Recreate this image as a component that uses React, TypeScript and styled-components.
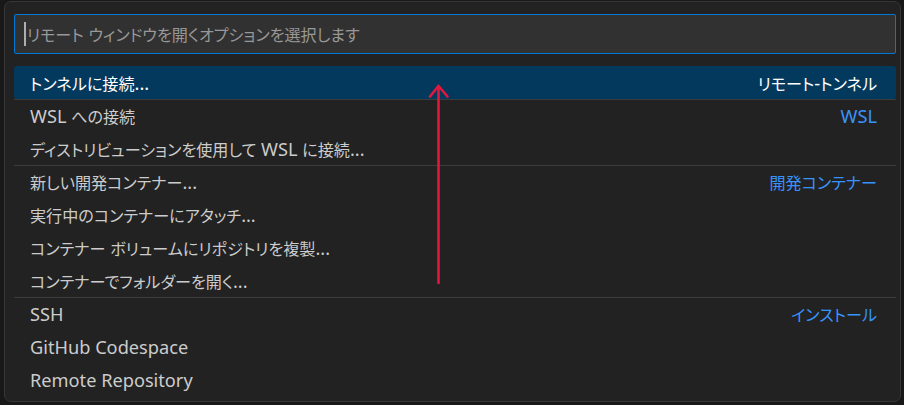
import React from "react";
import styled, { createGlobalStyle } from "styled-components";

const GlobalStyle = createGlobalStyle`
  html, body {
    margin: 0;
    padding: 0;
    background: #181818;
  }
  body {
    width: 904px;
    height: 405px;
    overflow: hidden;
    font-family: "Noto Sans", "Noto Sans CJK JP", sans-serif;
  }
`;

const Stage = styled.div`
  position: relative;
  width: 904px;
  height: 405px;
  box-sizing: border-box;
  padding: 1px 3px 3px 4px;
`;

const Panel = styled.div`
  box-sizing: border-box;
  width: 897px;
  height: 401px;
  background: #222222;
  border: 1px solid #363636;
  border-radius: 7px;
  padding: 12px 4px 0 9px;
  display: flex;
  flex-direction: column;
  gap: 12px;
  overflow: hidden;
`;

const InputBox = styled.div`
  box-sizing: border-box;
  height: 40px;
  background: #313131;
  border: 1px solid #0078d4;
  border-radius: 2px;
  display: flex;
  align-items: center;
  padding-left: 9px;
`;

const Caret = styled.span`
  width: 2px;
  height: 24px;
  background: #aeafad;
  flex: none;
`;

const Placeholder = styled.span`
  margin-left: 1px;
  color: #989898;
  font-size: 18.2px;
  white-space: nowrap;
`;

const List = styled.div`
  display: flex;
  flex-direction: column;
`;

const Row = styled.div<{ $sep?: boolean; $active?: boolean }>`
  box-sizing: border-box;
  height: 33px;
  display: flex;
  align-items: center;
  justify-content: space-between;
  padding: 0 19px 0 16px;
  border-top: 1px solid ${(p) => (p.$sep ? "#3c3c3c" : "transparent")};
  background: ${(p) => (p.$active ? "#04395e" : "transparent")};
  border-radius: ${(p) => (p.$active ? "3px" : "0")};
  color: ${(p) => (p.$active ? "#ffffff" : "#cccccc")};
  font-size: 18.2px;
  white-space: nowrap;
`;

const Label = styled.span``;

const Group = styled.span<{ $active?: boolean }>`
  color: ${(p) => (p.$active ? "#ffffff" : "#3794ff")};
`;

const Cjk = styled.span`
  font-family: "Noto Sans CJK JP", sans-serif;
  font-size: 0.885em;
  font-feature-settings: "palt";
`;

const Overlay = styled.svg`
  position: absolute;
  left: 0;
  top: 0;
  pointer-events: none;
`;

const CJK_RE = /([\u3000-\u30ff\u4e00-\u9fff\uff00-\uffef]+)/;

function Txt({ children }: { children: string }) {
  const parts = children.split(CJK_RE).filter((s) => s.length > 0);
  return (
    <>
      {parts.map((p, i) =>
        CJK_RE.test(p) ? <Cjk key={i}>{p}</Cjk> : <React.Fragment key={i}>{p}</React.Fragment>
      )}
    </>
  );
}

type Item = { label: string; group?: string; sep?: boolean; active?: boolean };

const items: Item[] = [
  { label: "トンネルに接続...", group: "リモート-トンネル", active: true },
  { label: "WSL への接続", group: "WSL", sep: true },
  { label: "ディストリビューションを使用して WSL に接続..." },
  { label: "新しい開発コンテナー...", group: "開発コンテナー", sep: true },
  { label: "実行中のコンテナーにアタッチ..." },
  { label: "コンテナー ボリュームにリポジトリを複製..." },
  { label: "コンテナーでフォルダーを開く..." },
  { label: "SSH", group: "インストール", sep: true },
  { label: "GitHub Codespace" },
  { label: "Remote Repository" },
];

export default function App() {
  return (
    <Stage>
      <GlobalStyle />
      <Panel>
        <InputBox>
          <Caret />
          <Placeholder>
            <Txt>リモート ウィンドウを開くオプションを選択します</Txt>
          </Placeholder>
        </InputBox>
        <List>
          {items.map((it) => (
            <Row key={it.label} $sep={it.sep} $active={it.active}>
              <Label>
                <Txt>{it.label}</Txt>
              </Label>
              {it.group && (
                <Group $active={it.active}>
                  <Txt>{it.group}</Txt>
                </Group>
              )}
            </Row>
          ))}
        </List>
      </Panel>
      <Overlay width={904} height={405} viewBox="0 0 904 405">
        <g stroke="#e3173e" strokeWidth={2.6} strokeLinecap="round" fill="none" strokeLinejoin="round">
          <line x1={438.5} y1={283} x2={438.5} y2={86} />
          <polyline points="430,96.5 438.5,86 447.5,96.5" />
        </g>
      </Overlay>
    </Stage>
  );
}
